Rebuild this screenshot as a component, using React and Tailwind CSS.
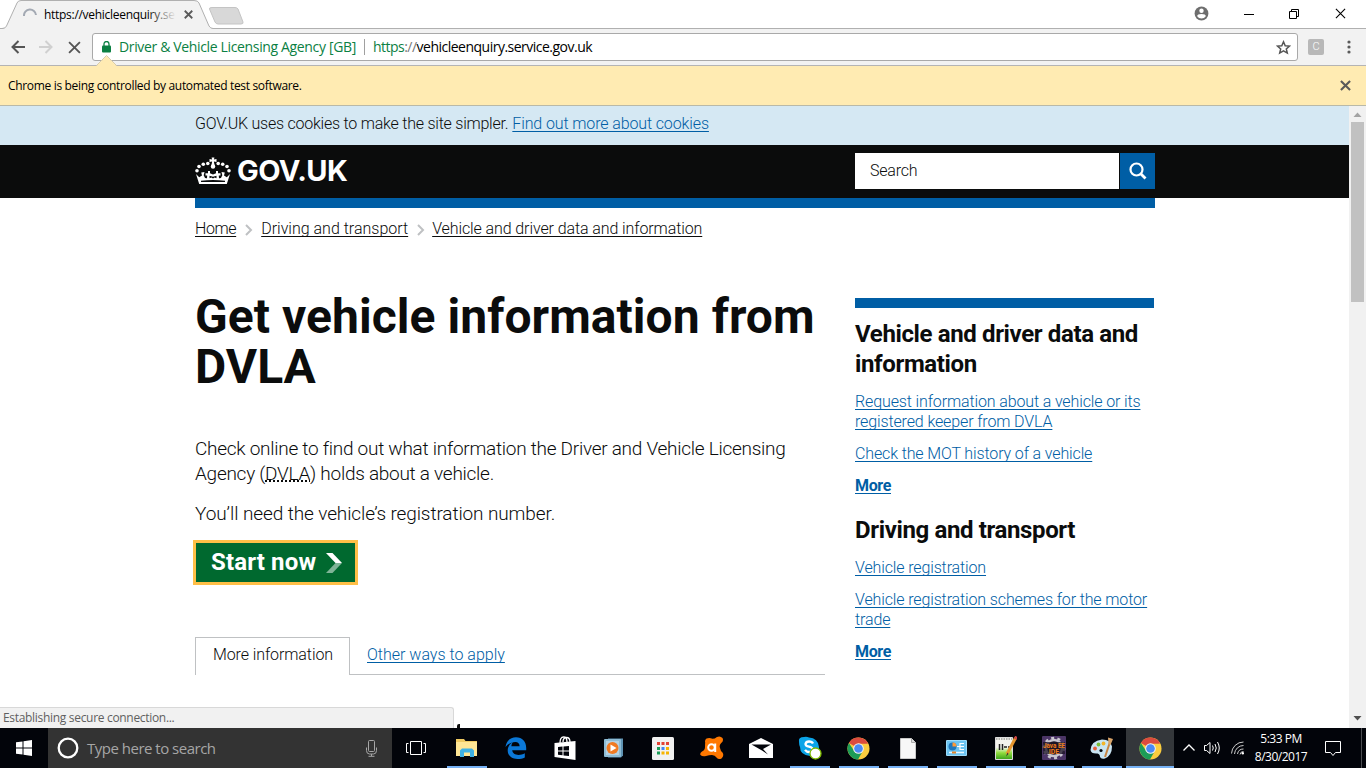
const ui = "font-['Open_Sans',sans-serif]";
const body = "font-['Roboto',sans-serif] font-light";
const bold = "font-['Roboto',sans-serif] font-bold";
const underline = "underline decoration-1 underline-offset-2 [text-decoration-skip-ink:none]";

function Cross({ className, size = 12, width = 1.5 }) {
  return (
    <svg className={className} width={size} height={size} viewBox="0 0 12 12" stroke="currentColor" strokeWidth={width} fill="none">
      <path d="M1 1l10 10M11 1L1 11" />
    </svg>
  );
}

function TabStrip() {
  return (
    <div className="relative flex h-[29px] shrink-0 items-start border-b border-[#b0b0b0] bg-white">
      <div className="relative h-[29px] w-[213px]">
        <svg className="absolute top-0 left-0" width="250" height="29">
          <path d="M0 29H2Q5.500 28.500 6.500 26L17 3Q18 0.500 21 0.500H194Q198 0.500 199 3L209 26Q210.500 28.500 213 28.500V29Z" fill="#f2f2f2" />
          <path d="M0 28.500H2Q5.500 28.500 6.500 26L17 3Q18 0.500 21 0.500H194Q198 0.500 199 3L209 26Q210.500 28.500 213 28.500" fill="none" stroke="#b0b0b0" />
          <path d="M212 7.500H235Q237 7.500 238 9L243 22Q243.500 24 241 24H218Q216 24 215 22L209.500 9Q209 7.500 212 7.500Z" fill="#d8d8d8" stroke="#c4c4c4" />
        </svg>
        <div className="relative flex h-[29px] items-center pl-[23px]">
          <svg width="14" height="14" viewBox="0 0 14 14" fill="none" stroke="#a3a9b3" strokeWidth="2">
            <path d="M1 8a6 6 0 0 1 12-1" />
          </svg>
          <div className="relative ml-[7px] w-[132px] overflow-hidden">
            <span className={`${ui} block text-xs tracking-[-0.29px] whitespace-nowrap text-black`}>https://vehicleenquiry.se</span>
            <div className="absolute top-0 right-0 h-full w-7 bg-linear-to-r from-[#f2f2f2]/0 to-[#f2f2f2]" />
          </div>
          <Cross className="ml-[8px] text-[#5a5a5a]" size={9} width={2.4} />
        </div>
      </div>
      <div className="ml-auto flex h-[27px] items-center pr-[20px] text-black">
        <svg className="mr-[35px]" width="15" height="15" viewBox="0 0 15 15">
          <circle cx="7.500" cy="7.500" r="6.900" fill="#6e6e6e" />
          <circle cx="7.500" cy="4.800" r="2.200" fill="#fff" />
          <path d="M3.200 10.300q0-2.300 4.300-2.300t4.300 2.300q-1.500 2.300-4.300 2.300t-4.300-2.300z" fill="#fff" />
        </svg>
        <svg className="mr-[35px]" width="10" height="10"><path d="M0 5.500h10" stroke="currentColor" /></svg>
        <svg className="mr-[36px]" width="10" height="10" fill="none" stroke="currentColor">
          <path d="M0.500 2.500h7v7h-7zM2.500 2.500v-2h7v7h-2" />
        </svg>
        <Cross size={11} width={1.2} />
      </div>
    </div>
  );
}

function Toolbar() {
  return (
    <div className="flex h-[37px] shrink-0 items-center border-b border-[#b4b4b4] bg-[#f2f2f2]">
      <svg className="ml-[11px]" width="14" height="14" fill="none" stroke="#555" strokeWidth="2"><path d="M14 7H1.500M7.500 1L1.500 7l6 6" /></svg>
      <svg className="ml-[14px]" width="14" height="14" fill="none" stroke="#d0d0d0" strokeWidth="2"><path d="M0 7h12.500M6.500 1l6 6-6 6" /></svg>
      <Cross className="ml-[15px] text-[#555]" size={13} width={1.7} />
      <div className={`${ui} ml-[11px] flex h-[28px] w-[1206px] items-center rounded-[3px] border border-[#a9a9a9] bg-white text-sm`}>
        <svg className="ml-[9px]" width="9" height="12" viewBox="0 0 9 12">
          <path d="M2 5V3a2.500 2.500 0 0 1 5 0v2" fill="none" stroke="#0b8043" strokeWidth="1.300" />
          <rect y="4.500" width="9" height="7" rx="1" fill="#0b8043" />
        </svg>
        <span className="ml-[8px] tracking-[-0.35px] whitespace-nowrap text-[#0b8043]">Driver &amp; Vehicle Licensing Agency [GB]</span>
        <span className="ml-[8px] h-4 w-px bg-[#a0a0a0]" />
        <span className="ml-[8px] tracking-[-0.51px] whitespace-nowrap text-black"><span className="text-[#0b8043]">https</span><span className="text-[#777]">://</span>vehicleenquiry.service.gov.uk</span>
        <svg className="mr-[6px] ml-auto" width="15" height="15" viewBox="0 0 15 15" fill="none" stroke="#555" strokeWidth="1.500">
          <path d="M7.500 1.800l1.700 3.900 4.300.4-3.200 2.800 1 4.200-3.800-2.200-3.800 2.200 1-4.200L1.500 6.100l4.300-.4z" />
        </svg>
      </div>
      <span className={`${body} ml-[10px] flex size-4 items-center justify-center rounded-[2px] bg-[#b8b8b8] text-[11px] text-white`}>C</span>
      <svg className="ml-[23px]" width="4" height="14" fill="#5a5a5a"><circle cx="2" cy="2" r="1.600" /><circle cx="2" cy="7" r="1.600" /><circle cx="2" cy="12" r="1.600" /></svg>
    </div>
  );
}

function InfoBar() {
  return (
    <div className="relative flex h-[40px] shrink-0 items-center border-b border-[#b9b9a8] bg-[#ffebb2] px-2">
      <svg className="absolute -top-[11px] left-[96px]" width="22" height="12">
        <path d="M0.500 11L10.500 1l10 10v1h-20z" fill="#ffebb2" />
        <path d="M0.500 10.500L10.500 0.500l10 10" fill="none" stroke="#d8ccaa" />
      </svg>
      <span className={`${ui} text-xs tracking-[-0.33px] text-black`}>Chrome is being controlled by automated test software.</span>
      <Cross className="mr-[7px] ml-auto text-[#5a5a5a]" size={11} width={2.3} />
    </div>
  );
}

function Crown() {
  return (
    <svg width="36" height="28" viewBox="0 0 36 28" fill="#fff">
      <path d="M16.600 0.500h2.800l-.5 2 2.600-.5v3l-2.600-.5 1 6h-3.800l1-6-2.600.5v-3l2.600.5z" />
      <circle cx="18" cy="9.500" r="2.200" />
      <circle cx="12.800" cy="6.500" r="1.800" /><circle cx="8.300" cy="7.300" r="1.800" /><circle cx="4" cy="9.500" r="1.800" /><circle cx="2" cy="13.800" r="1.800" />
      <circle cx="23.200" cy="6.500" r="1.800" /><circle cx="27.700" cy="7.300" r="1.800" /><circle cx="32" cy="9.500" r="1.800" /><circle cx="34" cy="13.800" r="1.800" />
      <path d="M1 17l3.200 3.200L7 18.500 6.200 15.500l3.300-.5 -.8 3.200q1 3.500 3.300 3l.2-2.700h-1.700v-2.300h2.500v-2.200h2v2.200l3 1.300 3-1.300v-2.200h2v2.200h2.500v2.300h-1.700l.2 2.700q2.300.5 3.300-3l-.8-3.200 3.300.5-.8 3 2.800 1.700L35 17l-3.200 10H4.200zM14.500 18.800v2.400l2-.7 1.500 1 1.500-1 2 .7v-2.400l-3.500 1zM6 23.700v1.300h24v-1.300q-12-1.400-24 0z" fillRule="evenodd" />
    </svg>
  );
}

function Chevron() {
  return <svg width="8" height="12" fill="none" stroke="#bfc1c3" strokeWidth="2"><path d="M1 1l5 5-5 5" /></svg>;
}

function SideLinks({ title, links, className }) {
  return (
    <div className={className}>
      <h2 className={`${bold} text-2xl leading-[30px] tracking-[-0.37px]`}>{title}</h2>
      <ul className={`${body} mt-[13px] flex flex-col gap-3 text-base leading-5 text-[#005ea5]`}>
        {links.map((lines) => (
          <li key={lines[0]} className="tracking-[-0.13px]">
            {lines.map((l) => <span key={l} className={`${underline} block w-fit whitespace-nowrap`}>{l}</span>)}
          </li>
        ))}
        <li className={`${bold} ${underline} tracking-[-0.35px]`}>More</li>
      </ul>
    </div>
  );
}

function Page() {
  return (
    <div className="relative flex min-h-0 flex-1 overflow-hidden bg-white text-[#0b0c0c]">
      <div className="min-w-0 flex-1 overflow-hidden">
        <div className={`${body} h-[39px] bg-[#d5e8f3] pl-[195px] text-base leading-[36px] whitespace-nowrap`}>
          <span className="tracking-[-0.23px]">GOV.UK uses cookies to make the site simpler.</span>
          <span className={`${underline} ml-[4px] tracking-[-0.12px] text-[#005ea5]`}>Find out more about cookies</span>
        </div>
        <header className="h-[53px] bg-[#0b0c0c] pl-[195px]">
          <div className="flex h-[52px] w-[960px] items-center">
            <Crown />
            <span className="ml-[6px] font-['Inter',sans-serif] text-[29px] leading-9 font-bold tracking-[-0.55px] text-white">GOV.UK</span>
            <div className={`${body} ml-auto flex h-9 w-[264px] items-center bg-white pl-[15px] text-base tracking-[-0.2px]`}>Search</div>
            <div className="ml-px flex h-9 w-[35px] items-center justify-center bg-[#005ea5]">
              <svg width="18" height="18" fill="none" stroke="#fff" strokeWidth="2.200"><circle cx="7.500" cy="7.500" r="6" /><path d="M11.500 11.500l5 5" strokeWidth="2.800" /></svg>
            </div>
          </div>
        </header>
        <main className="ml-[195px] w-[960px]">
          <div className="h-[10px] bg-[#005ea5]" />
          <nav className={`${body} flex h-[42px] items-center text-base whitespace-nowrap`}>
            <span className={`${underline} tracking-[-0.4px]`}>Home</span>
            <span className="mt-0.5 mr-[8px] ml-[9px]"><Chevron /></span>
            <span className={underline}>Driving and transport</span>
            <span className="mt-0.5 mr-[7px] ml-[9px]"><Chevron /></span>
            <span className={`${underline} tracking-[-0.1px]`}>Vehicle and driver data and information</span>
          </nav>
          <div className="flex justify-between">
            <div className="w-[630px] pt-[42px]">
              <h1 className={`${bold} text-5xl leading-[50px] tracking-[0.05px] whitespace-nowrap`}>Get vehicle information from<br />DVLA</h1>
              <div className={`${body} mt-[44px] flex flex-col gap-[15px] text-[19px] leading-[25px] whitespace-nowrap`}>
                <p className="tracking-[-0.27px]">Check online to find out what information the Driver and Vehicle Licensing<br />Agency (<span className="underline decoration-dotted decoration-2 underline-offset-0">DVLA</span>) holds about a vehicle.</p>
                <p className="tracking-[-0.11px]">You’ll need the vehicle’s registration number.</p>
              </div>
              <div className={`${bold} -ml-[2px] mt-[14px] flex h-[45px] w-[165px] items-center border-[3px] border-[#ffbf47] bg-[#00692f] pb-0.5 pl-[15px] text-2xl tracking-[0.15px] text-white`}>
                Start now
                <svg className="mt-[2px] ml-[10px]" width="16" height="20">
                  <path d="M0 0h6.500L16 10H9.500z" fill="#fff" /><path d="M9.500 10H16L6.500 20H0z" fill="#7fb497" />
                </svg>
              </div>
              <div className={`${body} mt-[52px] flex h-[38px] text-base`}>
                <div className="flex w-[155px] items-center border-x border-t border-[#bfc1c3] pb-[3px] pl-[17px]"><span className="tracking-[-0.1px] whitespace-nowrap">More information</span></div>
                <div className="flex flex-1 items-center border-b border-[#bfc1c3] pb-[1px] pl-[17px] text-[#005ea5]"><span className={underline}>Other ways to apply</span></div>
              </div>
            </div>
            <aside className="mr-[1px] w-[299px] pt-[48px]">
              <div className="h-[10px] bg-[#005ea5]" />
              <SideLinks className="mt-[11px]" title="Vehicle and driver data and information" links={[["Request information about a vehicle or its", "registered keeper from DVLA"], ["Check the MOT history of a vehicle"]]} />
              <SideLinks className="mt-[19px]" title="Driving and transport" links={[["Vehicle registration"], ["Vehicle registration schemes for the motor", "trade"]]} />
            </aside>
          </div>
        </main>
      </div>
      <div className="flex w-[17px] shrink-0 flex-col items-center bg-[#f1f1f1]">
        <svg className="mt-[6px]" width="9" height="5"><path d="M0.500 5l4-4.500 4 4.500z" fill="#a3a3a3" /></svg>
        <div className="mt-[5px] h-[180px] w-[13px] bg-[#c1c1c1]" />
        <svg className="mt-auto mb-[7px]" width="9" height="5"><path d="M0.500 0l4 4.500 4-4.500z" fill="#505050" /></svg>
      </div>
      <div className="absolute bottom-0 left-[457px] h-[4px] w-[3px] rounded-tl-xs bg-[#0b0c0c]" />
      <div className={`${ui} absolute bottom-0 left-0 flex h-[21px] w-[454px] items-center rounded-tr-[3px] border-t border-r border-[#d8d8d8] bg-[#f1f1f1] pl-[3px] text-xs tracking-[-0.31px] text-[#5f5f5f]`}>Establishing secure connection...</div>
    </div>
  );
}

function ChromeIcon() {
  return (
    <svg width="23" height="23" viewBox="0 0 24 24">
      <circle cx="12" cy="12" r="11.500" fill="#fbcd3f" />
      <path d="M12 12L2 6.300A11.500 11.500 0 0 1 22 6.500L21 7H12z" fill="#dc4b3e" />
      <path d="M2 6.300A11.500 11.500 0 0 0 11.500 23.500L16.500 14.500 12 12 7.500 14.500z" fill="#1c9c57" />
      <circle cx="12" cy="12" r="5.500" fill="#f4f4f4" /><circle cx="12" cy="12" r="4.500" fill="#4a8af4" />
    </svg>
  );
}

const icons = [
  { name: "explorer", open: true, art: (
    <svg width="23" height="20" viewBox="0 0 23 20">
      <path d="M1 1h8l1.500 2H22v15H1z" fill="#f0ca62" /><path d="M1 4h21v14H1z" fill="#ffe695" /><path d="M5 19v-6.500L7 10.500h10l2 2V19h-4v-4.500H9V19z" fill="#3fb1e3" />
    </svg>) },
  { name: "edge", art: (
    <svg width="22" height="22" viewBox="0 0 22 22">
      <path d="M0.500 10C1.300 3.800 5.500 0.300 11 0.300c6.300 0 10.200 4.400 10.200 10.400v2.600H7.200c.3 3.200 3 4.600 6.200 4.600 2.400 0 4.600-.7 6.400-1.700v4.300c-2 1-4.500 1.500-7.300 1.500-5.900 0-9.800-3.400-9.800-8.500 0-3.800 2-6.700 5.300-8.200-1 1-1.500 2.400-1.600 4h8.200c0-2.800-1.400-4.400-4.300-4.400C6.700 4.900 3 6.800.5 10z" fill="#0b78d7" />
    </svg>) },
  { name: "store", art: (
    <svg width="22" height="24" viewBox="0 0 22 24">
      <path d="M6 7q0-6 3.500-6t3.500 5M9 6q0-4.500 3.500-4.500T16 6" fill="none" stroke="#fff" strokeWidth="1.300" />
      <path d="M0.500 7L21.500 5v19L0.500 21z" fill="#fff" /><path d="M4 11l4.500-.5v4H4zm5.500-.6l5.500-.5v4.600H9.500zM4 15.500h4.500v3.800L4 18.800zm5.500 0H15v4.600l-5.500-.7z" fill="#02040a" />
    </svg>) },
  { name: "player", art: (
    <svg width="20" height="20" viewBox="0 0 20 20">
      <path d="M4 0.500h15v17l-2 2H4z" fill="#5f93b3" /><rect y="1" width="17" height="18" rx="1" fill="#8ebcd5" /><rect x="2" y="3" width="13" height="14" fill="#b5d2e2" /><circle cx="8.500" cy="10" r="6" fill="#f07a22" /><path d="M6.500 6.500l6 3.500-6 3.500z" fill="#fff" />
    </svg>) },
  { name: "apps", art: (
    <svg width="22" height="23" viewBox="0 0 22 23">
      <rect width="22" height="23" rx="1.500" fill="#f1f1f1" />
      <path d="M5 5h3v3H5zm4.500 0h3v3h-3zM14 5h3v3h-3z" fill="#e34234" /><path d="M5 10h3v3H5zm0 4.500h3v3H5z" fill="#1a9d58" /><path d="M9.500 10h3v3h-3z" fill="#4285f4" /><path d="M14 10h3v3h-3zm-4.500 4.500h3v3h-3zm4.500 0h3v3h-3z" fill="#f6b400" />
    </svg>) },
  { name: "avast", art: (
    <svg width="24" height="24" viewBox="0 0 24 24">
      <path d="M6.500 2.500q3-1.200 6 .3 2.500 0 4-1.500 3.500-2 6 .7 1.500 3-1.500 5.200-2 2-1 4.800 .5 3 2.500 4.500 2 3-1 6-3 1.500-5-1-1.500-2.500-4.500-2.500-3 0-6 1-3.500 1-5.500-1-1-2 1.500-3.500 3-1.500 3-4.500 0-3 .2-4.500-.7-2.500 1.300-4z" fill="#ff7800" />
      <circle cx="11.500" cy="11.500" r="3.300" fill="none" stroke="#fff" strokeWidth="2" /><path d="M15.200 7.500v8.500" stroke="#fff" strokeWidth="2" />
    </svg>) },
  { name: "mail", art: (
    <svg width="24" height="20" viewBox="0 0 24 20"><path d="M0 6L12 0l12 6v14H0z" fill="#fff" /><path d="M2.500 6.500L22 6.500 14 11l5 5.500-6-4z" fill="#02040a" /></svg>) },
  { name: "skype", open: true, art: (
    <svg width="24" height="24" viewBox="0 0 24 24">
      <path d="M1 6Q0 1 6 1q3-.5 5 .5Q20 2 21 11q0 3-.5 4 1.500 5-3.500 6-3 .5-5-1Q2 19 2 11 1 9 1 6z" fill="#0ba4e8" />
      <path d="M15 7.500Q14 5.500 11 5.500T7.500 8q0 2 3.500 2.700t3.800 3Q14.500 16 11.500 16T7 13.800" fill="none" stroke="#fff" strokeWidth="2.300" /><circle cx="17.500" cy="17.500" r="5.500" fill="#fff" stroke="#7fba00" strokeWidth="1.300" />
    </svg>) },
  { name: "chrome", open: true, art: <ChromeIcon /> },
  { name: "document", open: true, art: (
    <svg width="16" height="21" viewBox="0 0 16 21"><path d="M0.500 0.500h11l4 4v16H0.500z" fill="#f7f7f7" stroke="#c9c9c9" /><path d="M11.500 0.500v4h4" fill="#ddd" stroke="#aaa" /></svg>) },
  { name: "panel", open: true, art: (
    <svg width="21" height="16" viewBox="0 0 21 16">
      <rect width="21" height="16" rx="1" fill="#9ddcfa" /><rect x="1" y="1" width="19" height="14" fill="#6cc4f2" /><circle cx="6.500" cy="6.500" r="4" fill="#1f78bd" /><path d="M6.500 6.500v-4a4 4 0 0 1 4 4z" fill="#ff9a36" /><path d="M11 6.500h3M14 3.500h4M14 6.500h4M14 9.500h4M14 3v7" stroke="#fff" strokeWidth="1.200" /><path d="M3 12.500h15" stroke="#e9f8ff" strokeWidth="1.500" /><path d="M6 12.500h4" stroke="#e0852a" strokeWidth="2" />
    </svg>) },
  { name: "notepad", open: true, art: (
    <svg width="22" height="24" viewBox="0 0 22 24">
      <defs><linearGradient id="np" x1="0" y1="0" x2="0" y2="1"><stop offset="0.450" stopColor="#f4f4ee" /><stop offset="0.700" stopColor="#8fdc3e" /><stop offset="1" stopColor="#39a01c" /></linearGradient></defs>
      <path d="M0.500 1.500h17v22h-17z" fill="url(#np)" stroke="#ddd" /><path d="M1 3h16" stroke="#777" strokeDasharray="1.500 1" /><path d="M4.500 8v6M7.500 8v6M9 11h3M13 11h2" stroke="#222" strokeWidth="1.500" /><path d="M20.500 2L12 18" stroke="#e5952d" strokeWidth="3" /><path d="M21.500 0.500l-1.300 2.500" stroke="#c44" strokeWidth="3" /><path d="M12.500 16.500l-1.500 4 2.500-2.500z" fill="#333" />
    </svg>) },
  { name: "eclipse", open: true, narrow: true, art: (
    <svg width="24" height="24" viewBox="0 0 24 24">
      <rect width="24" height="24" rx="1" fill="#4b3566" /><circle cx="12" cy="12" r="8" fill="#1c1626" stroke="#c9c6cf" strokeWidth="2.500" /><circle cx="12" cy="12" r="10" fill="none" stroke="#c9c6cf" strokeWidth="2.500" strokeDasharray="3 3.280" /><path d="M1 6h22v12H1z" fill="#1c1626" opacity="0.750" />
      <text x="12" y="11.500" textAnchor="middle" fontFamily="Roboto, sans-serif" fontSize="7" fontWeight="700" fill="#ee7d1c" textLength="22" lengthAdjust="spacingAndGlyphs">Java EE</text><text x="12" y="18" textAnchor="middle" fontFamily="Roboto, sans-serif" fontSize="7" fontWeight="700" fill="#ee7d1c">IDE</text>
    </svg>) },
  { name: "paint", open: true, narrow: true, art: (
    <svg width="24" height="24" viewBox="0 0 24 24">
      <path d="M0.500 14Q1 5 12 3.500q9 0 10 7 0 9-7 12-4 1-5-1.500 0-3-2.500-3.500Q1 18 .5 14z" fill="#c9e4f3" /><circle cx="5" cy="12.500" r="1.900" fill="#e6613c" /><circle cx="8.500" cy="8.500" r="1.900" fill="#7cbf3a" /><circle cx="13.500" cy="7.500" r="1.900" fill="#f3b52b" /><circle cx="11" cy="14.500" r="1.600" fill="#02040a" /><path d="M21 3l-6 18" stroke="#c88442" strokeWidth="2" /><path d="M18 1.500l5 1.500-2.500 6-2-.8z" fill="#d9a46a" />
    </svg>) },
  { name: "chrome-active", open: true, narrow: true, active: true, art: <ChromeIcon /> },
];

function Taskbar() {
  return (
    <div className={`${ui} flex h-[40px] shrink-0 items-stretch bg-[#02040a] text-white`}>
      <div className="flex w-12 items-center justify-center">
        <svg width="16" height="16" fill="#fff"><path d="M0 2.300l6.500-.9V7.500H0zM7.500 1.200L16 0v7.500H7.500zM0 8.500h6.500v6.100L0 13.700zM7.500 8.500H16V16l-8.500-1.200z" /></svg>
      </div>
      <div className="flex w-[344px] items-center bg-[#333] text-[#a6a6a6]">
        <svg className="ml-[9px]" width="22" height="22" fill="none" stroke="#fff"><circle cx="11" cy="11" r="9.300" strokeWidth="2.300" /></svg>
        <span className="ml-[8px] text-[15px] tracking-[-0.5px] whitespace-nowrap">Type here to search</span>
        <svg className="mr-[14px] ml-auto" width="13" height="17" fill="none" stroke="#a6a6a6"><rect x="3.500" y="0.500" width="6" height="11" rx="1" /><path d="M1.500 7.500v3q0 3.500 3 3.500h4q3 0 3-3.500v-3M6.500 14v2M3.500 16.300h6" /></svg>
      </div>
      <div className="flex w-[50px] items-center pl-[14px]">
        <svg width="20" height="14" fill="none" stroke="#fff"><path d="M4.500 0.500h11v13h-11zM2.500 2.500h-2v9h2M17.500 2.500h2v9h-2" /></svg>
      </div>
      {icons.map(({ name, open, active, narrow, art }) => (
        <div key={name} className={`relative flex items-center justify-center ${narrow ? "w-12" : "w-[49px]"} ${active ? "bg-[#34373b]" : ""}`}>
          {art}
          {open && <div className={`absolute bottom-0 h-0.5 bg-[#76b1f5] ${active ? "w-12" : "w-10"}`} />}
        </div>
      ))}
      <div className="flex flex-1 items-center">
        <svg className="ml-[9px]" width="12" height="8" fill="none" stroke="#fff" strokeWidth="1.300"><path d="M0.500 6.500L6 1l5.500 5.500" /></svg>
        <svg className="ml-[9px]" width="18" height="14" fill="none" stroke="#fff"><path d="M0.500 4.500h2l3.500-3v11l-3.500-3h-2zM8.500 4.500q1.500 2.500 0 5M11 3q2.500 4 0 8M13.500 1q3.500 6 0 12" /></svg>
        <svg className="ml-[9px]" width="14" height="14" fill="none" stroke="#ccc"><path d="M0.500 12.500A12 12 0 0 1 12.500 1M3.500 13A9 9 0 0 1 12.500 4.500M6.500 13a6 6 0 0 1 6-5M9 13.500a3.500 3.500 0 0 1 3.500-3" /><circle cx="11.800" cy="12.300" r="1.200" fill="#fff" stroke="none" /></svg>
        <div className="ml-[6px] flex w-[60px] flex-col items-center text-xs leading-[18px] tracking-[-0.5px] whitespace-nowrap"><span>5:33 PM</span><span>8/30/2017</span></div>
        <svg className="ml-[14px]" width="16" height="17" fill="none" stroke="#fff"><path d="M0.500 1.500h15v11h-5l-2.500 3-2.500-3h-5z" /></svg>
        <div className="mr-[4px] ml-auto h-10 w-px bg-[#4a4c50]" />
      </div>
    </div>
  );
}

export default function App() {
  return (
    <div className="flex h-[768px] w-[1366px] flex-col overflow-hidden">
      <TabStrip />
      <Toolbar />
      <InfoBar />
      <Page />
      <Taskbar />
    </div>
  );
}
